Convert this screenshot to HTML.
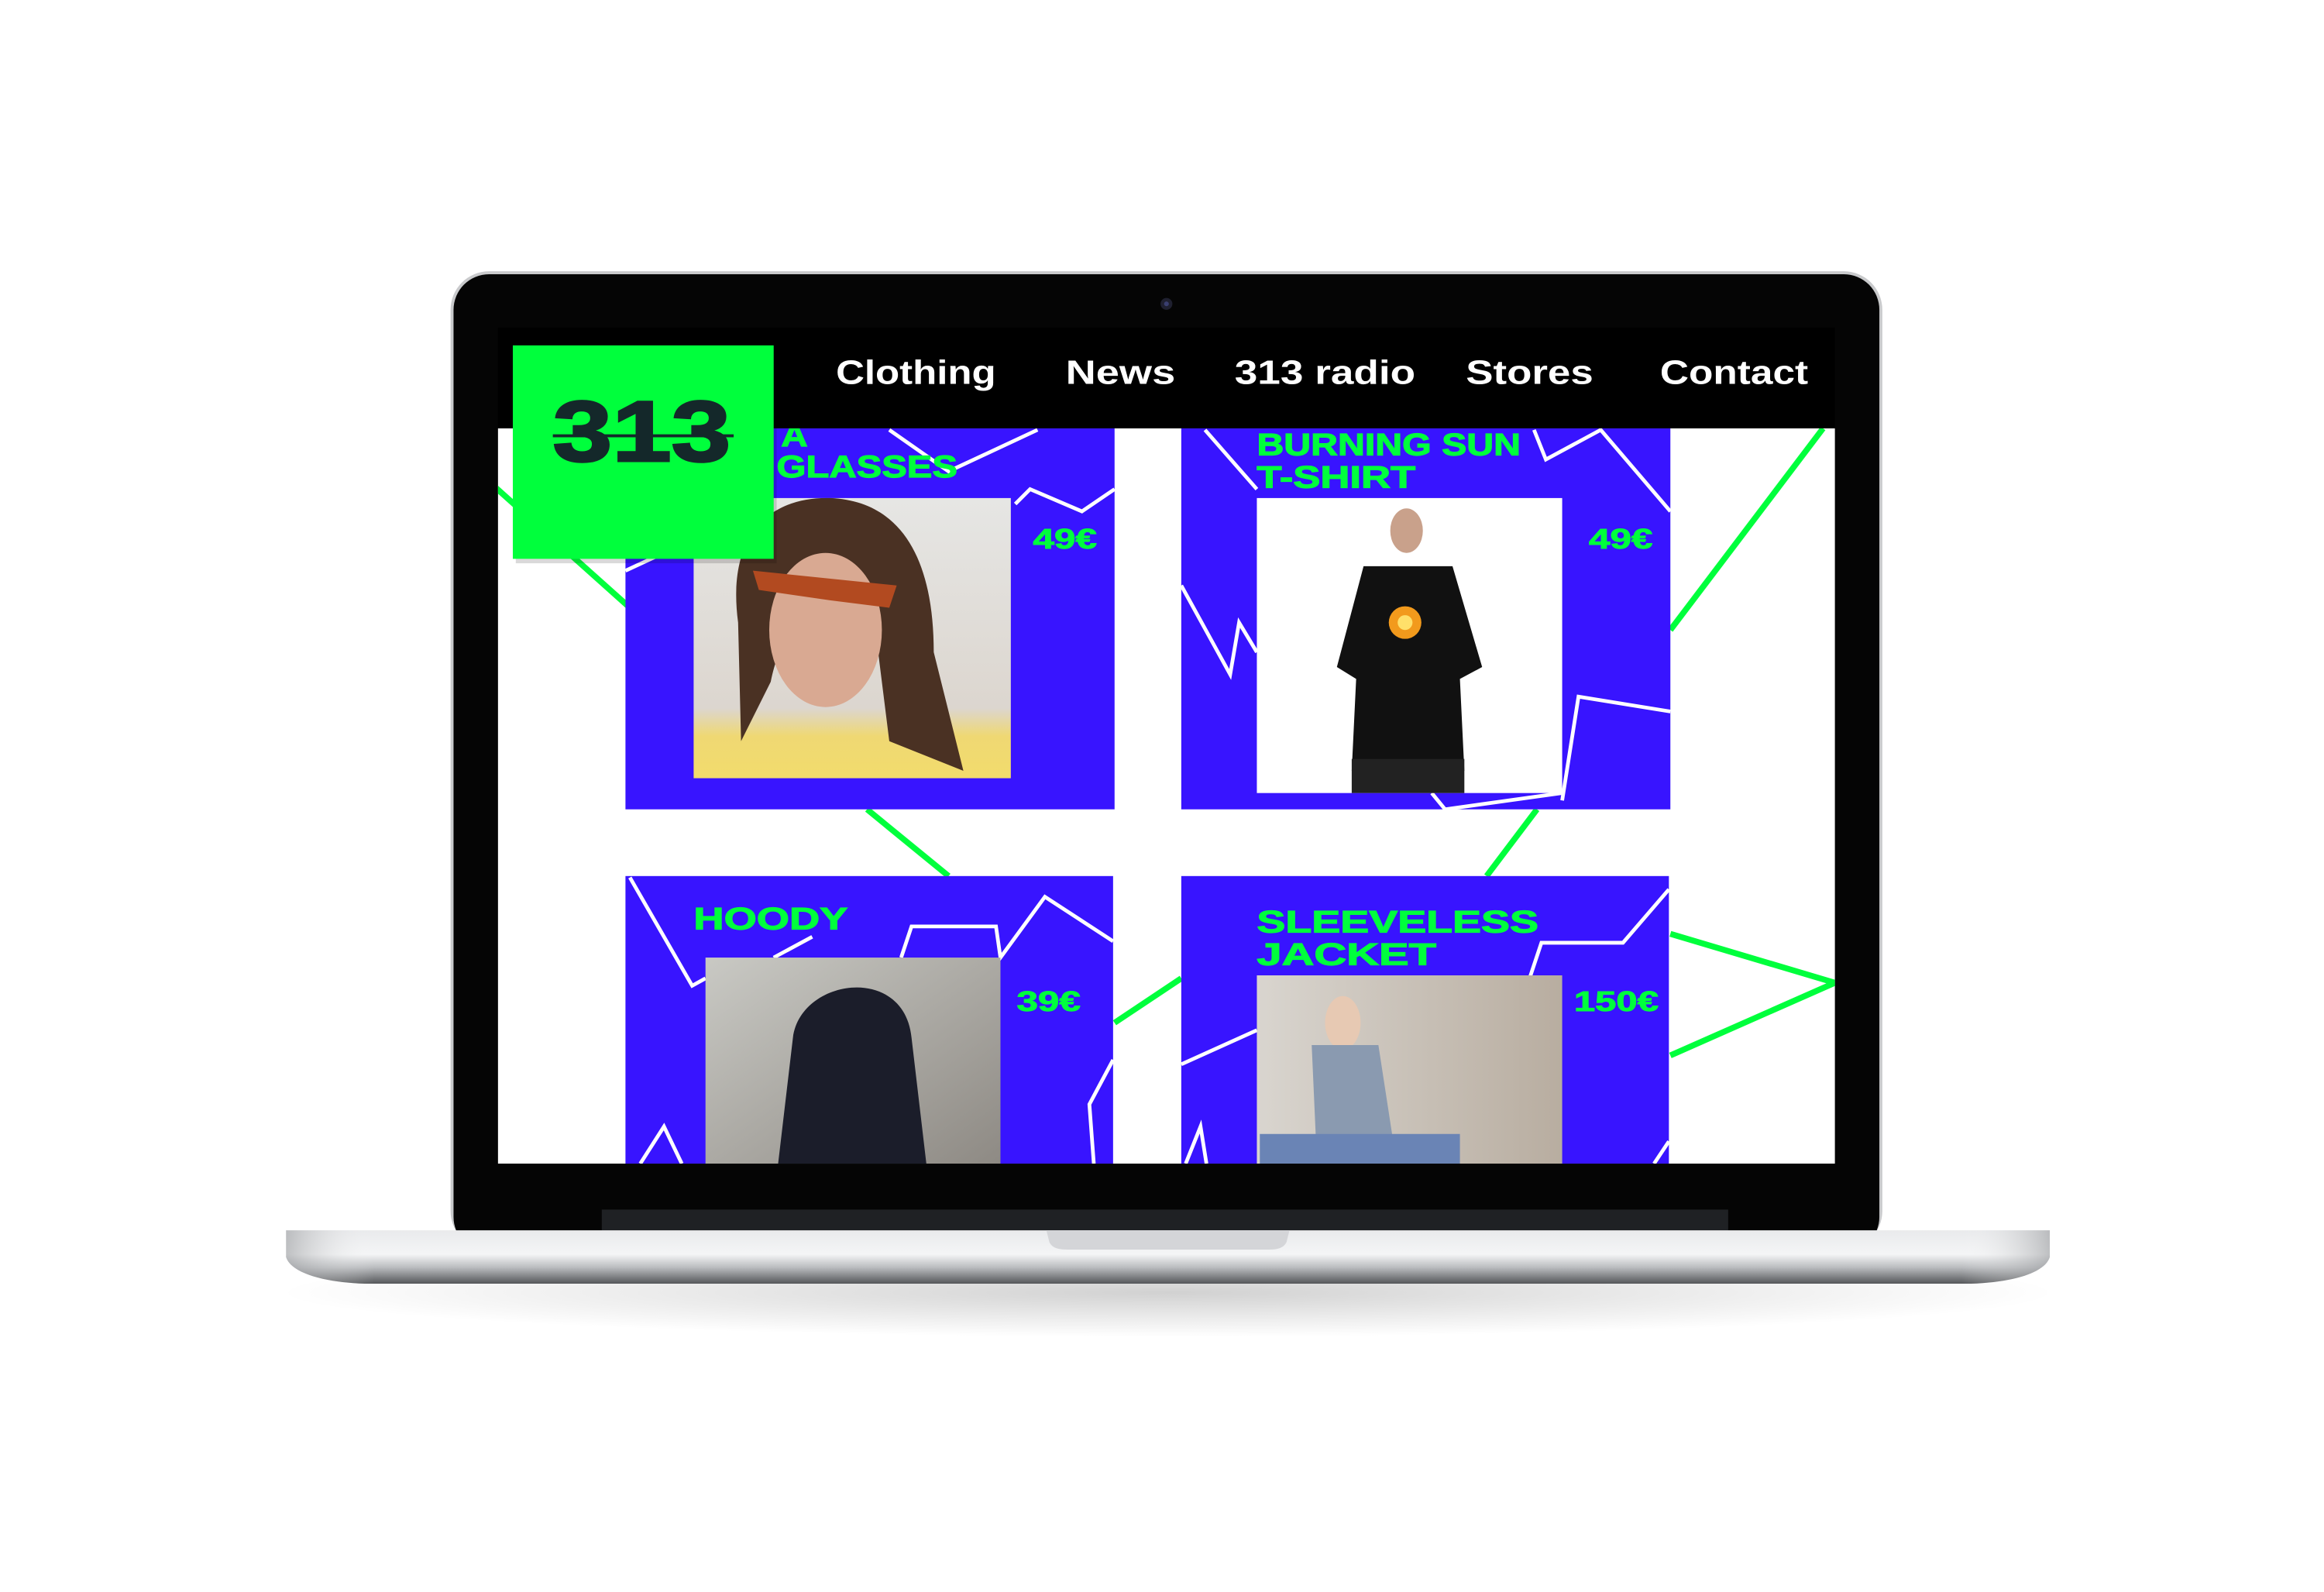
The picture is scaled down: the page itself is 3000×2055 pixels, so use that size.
<!DOCTYPE html>
<html><head><meta charset="utf-8"><style>
html,body{margin:0;padding:0;background:#fff;width:3000px;height:2055px;overflow:hidden}
svg{display:block}
.nav{font-family:"Liberation Sans",sans-serif;font-weight:bold;font-size:23px;fill:#fff}
.t{font-family:"Liberation Sans",sans-serif;font-weight:bold;font-size:21px;fill:#00ff3c;stroke:#00ff3c;stroke-width:.6}
.p{font-family:"Liberation Sans",sans-serif;font-weight:bold;font-size:19px;fill:#00ff3c;stroke:#00ff3c;stroke-width:.5}
</style></head><body>
<svg width="3000" height="2055" viewBox="0 0 1568 1074" preserveAspectRatio="none">
<defs>
<linearGradient id="base" x1="0" y1="0" x2="0" y2="1">
<stop offset="0" stop-color="#e9eaec"/><stop offset="0.45" stop-color="#f4f5f6"/><stop offset="0.7" stop-color="#b9bbbe"/><stop offset="1" stop-color="#55575a"/></linearGradient>
<linearGradient id="baseh" x1="0" y1="0" x2="1" y2="0">
<stop offset="0" stop-color="#9a9c9f" stop-opacity=".6"/><stop offset="0.05" stop-color="#fff" stop-opacity="0"/><stop offset="0.95" stop-color="#fff" stop-opacity="0"/><stop offset="1" stop-color="#9a9c9f" stop-opacity=".6"/></linearGradient>
<radialGradient id="sh" cx="0.5" cy="0.5" r="0.5"><stop offset="0" stop-color="#000" stop-opacity=".18"/><stop offset="1" stop-color="#000" stop-opacity="0"/></radialGradient>
<linearGradient id="face1" x1="0" y1="0" x2="0" y2="1"><stop offset="0" stop-color="#e6e6e4"/><stop offset="0.75" stop-color="#dcd6cf"/><stop offset="0.85" stop-color="#efd873"/><stop offset="1" stop-color="#f2dc6c"/></linearGradient>
<linearGradient id="face4" x1="0" y1="0" x2="1" y2="0"><stop offset="0" stop-color="#d9d5cf"/><stop offset="1" stop-color="#b8ada0"/></linearGradient>
<linearGradient id="face3" x1="0" y1="0" x2="1" y2="1"><stop offset="0" stop-color="#c9c9c4"/><stop offset="1" stop-color="#8e8a84"/></linearGradient>
<clipPath id="scr"><rect x="336" y="289" width="902" height="496"/></clipPath>
</defs>
<ellipse cx="788" cy="872" rx="600" ry="30" fill="url(#sh)"/>
<rect x="304" y="183" width="966" height="660" rx="26" fill="#c9cacc"/>
<rect x="306" y="185" width="962" height="660" rx="24" fill="#050505"/>
<circle cx="787" cy="205" r="4" fill="#1f2030"/><circle cx="787" cy="205" r="1.6" fill="#3a3f70"/>
<rect x="336" y="221" width="902" height="564" fill="#000"/>
<rect x="336" y="289" width="902" height="496" fill="#fff"/>
<g clip-path="url(#scr)">
<g stroke="#00ff3c" stroke-width="4" fill="none">
<polyline points="330,325 425,410"/>
<polyline points="585,546 640,591"/>
<polyline points="1127,425 1230,289"/>
<polyline points="1003,591 1037,546"/>
<polyline points="752,690 797,660"/>
<polyline points="1127,630 1238,663 1127,712"/>
</g>
<rect x="422" y="289" width="330" height="257" fill="#3814ff"/>
<rect x="797" y="289" width="330" height="257" fill="#3814ff"/>
<rect x="422" y="591" width="329" height="200" fill="#3814ff"/>
<rect x="797" y="591" width="329" height="200" fill="#3814ff"/>
<g stroke="#fff" stroke-width="2.5" fill="none">
<polyline points="600,290 640,318 700,290"/>
<polyline points="685,340 695,330 730,345 752,330"/>
<polyline points="422,385 450,372"/>
<polyline points="813,290 848,330"/>
<polyline points="797,395 830,455 836,420 848,440"/>
<polyline points="1035,290 1043,310 1080,290 1127,345"/>
<polyline points="1054,540 1065,470 1127,480"/>
<polyline points="966,535 975,546 1054,535"/>
<polyline points="425,592 467,665 476,660"/>
<polyline points="522,646 548,632"/>
<polyline points="608,646 615,625 672,625 675,646 705,605 751,635"/>
<polyline points="432,785 448,760 460,785"/>
<polyline points="751,715 735,745 738,785"/>
<polyline points="1032,660 1040,636 1095,636 1126,600"/>
<polyline points="797,718 848,695"/>
<polyline points="800,785 810,760 814,785"/>
<polyline points="1116,785 1126,770"/>
</g>
<rect x="468" y="336" width="214" height="189" fill="url(#face1)"/>
<path d="M498,420 C490,360 520,335 560,336 C610,338 630,380 630,440 L650,520 L600,500 L590,420 C560,400 530,410 520,460 L500,500 Z" fill="#4a3123"/>
<ellipse cx="557" cy="425" rx="38" ry="52" fill="#d9a992"/>
<path d="M508,385 L605,395 L600,410 L560,405 L512,398 Z" fill="#b24a20"/>
<rect x="848" y="336" width="206" height="199" fill="#fff"/>
<ellipse cx="949" cy="358" rx="11" ry="15" fill="#c9a18b"/>
<path d="M920,382 L980,382 L1000,450 L985,458 L988,520 L912,520 L915,458 L902,450 Z" fill="#111"/>
<circle cx="948" cy="420" r="11" fill="#f29a1c"/><circle cx="948" cy="420" r="5" fill="#ffe06a"/>
<rect x="912" y="512" width="76" height="23" fill="#222"/>
<rect x="476" y="646" width="199" height="139" fill="url(#face3)"/>
<path d="M525,785 L535,700 C540,660 610,650 615,700 L625,785 Z" fill="#1b1d2a"/>
<rect x="848" y="658" width="206" height="127" fill="url(#face4)"/>
<ellipse cx="906" cy="690" rx="12" ry="18" fill="#e7c9b3"/>
<path d="M885,705 L930,705 L940,770 L888,772 Z" fill="#8a9ab0"/>
<rect x="850" y="765" width="135" height="20" fill="#6a84b5"/>
<text class="t" x="527" y="301" textLength="18" lengthAdjust="spacingAndGlyphs">A</text>
<text class="t" x="524" y="322" textLength="122" lengthAdjust="spacingAndGlyphs">GLASSES</text>
<text class="t" x="848" y="307" textLength="178" lengthAdjust="spacingAndGlyphs">BURNING SUN</text>
<text class="t" x="848" y="329" textLength="107" lengthAdjust="spacingAndGlyphs">T-SHIRT</text>
<text class="t" x="468" y="627" textLength="104" lengthAdjust="spacingAndGlyphs">HOODY</text>
<text class="t" x="848" y="629" textLength="190" lengthAdjust="spacingAndGlyphs">SLEEVELESS</text>
<text class="t" x="848" y="651" textLength="121" lengthAdjust="spacingAndGlyphs">JACKET</text>
<text class="p" x="697" y="370" textLength="43" lengthAdjust="spacingAndGlyphs">49€</text>
<text class="p" x="1072" y="370" textLength="43" lengthAdjust="spacingAndGlyphs">49€</text>
<text class="p" x="686" y="682" textLength="43" lengthAdjust="spacingAndGlyphs">39€</text>
<text class="p" x="1062" y="682" textLength="57" lengthAdjust="spacingAndGlyphs">150€</text>
</g>
<text class="nav" x="564" y="259" textLength="108" lengthAdjust="spacingAndGlyphs">Clothing</text>
<text class="nav" x="719" y="259" textLength="74" lengthAdjust="spacingAndGlyphs">News</text>
<text class="nav" x="833" y="259" textLength="122" lengthAdjust="spacingAndGlyphs">313 radio</text>
<text class="nav" x="989" y="259" textLength="86" lengthAdjust="spacingAndGlyphs">Stores</text>
<text class="nav" x="1120" y="259" textLength="100" lengthAdjust="spacingAndGlyphs">Contact</text>
<rect x="348" y="236" width="176" height="144" fill="#000" opacity=".15"/>
<rect x="346" y="233" width="176" height="144" fill="#00ff3c"/>
<text x="373" y="311" font-family="Liberation Sans,sans-serif" font-weight="bold" font-size="58" fill="#14282a" stroke="#14282a" stroke-width="1.5" textLength="120" lengthAdjust="spacingAndGlyphs">313</text>
<rect x="373" y="293" width="122" height="2" fill="#14282a"/>
<rect x="406" y="816" width="760" height="14" fill="#1f2124"/>
<path d="M193,830 L1383,830 L1383,848 C1380,858 1360,865 1330,866 L246,866 C216,865 196,858 193,848 Z" fill="url(#base)"/>
<path d="M193,830 L1383,830 L1383,848 C1380,858 1360,865 1330,866 L246,866 C216,865 196,858 193,848 Z" fill="url(#baseh)"/>
<path d="M706,830 L870,830 L868,838 C866,842 862,843 856,843 L720,843 C714,843 710,842 708,838 Z" fill="#d4d5d8"/>
</svg>
</body></html>
